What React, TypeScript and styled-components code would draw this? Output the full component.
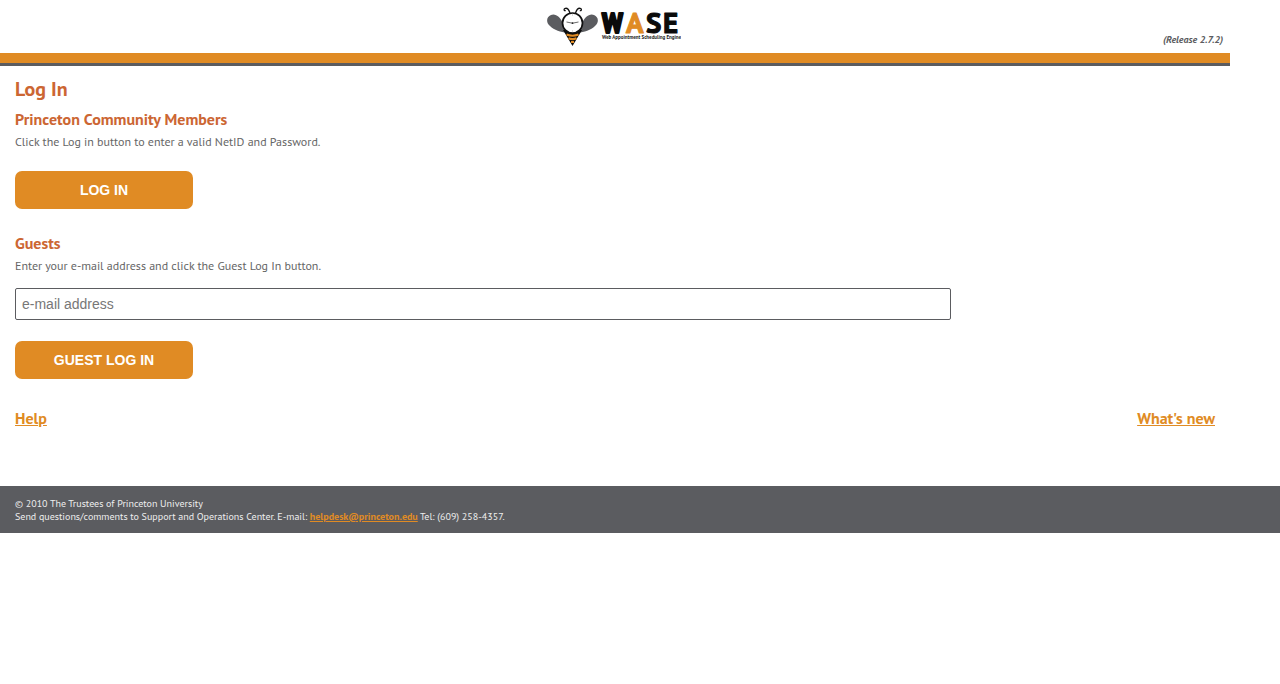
import React from "react";
import styled, { createGlobalStyle } from "styled-components";

const orange = "#e08b24";
const rust = "#cc6633";
const slate = "#5b5c60";

const GlobalStyle = createGlobalStyle`
  *, *::before, *::after { box-sizing: border-box; }
  body {
    margin: 0;
    background: #fff;
    color: #666;
    font-family: "PT Sans", "Noto Sans", sans-serif;
    font-size: 12px;
    line-height: 16px;
  }
`;

const Page = styled.div`
  margin-right: 50px;
`;

const Header = styled.header`
  display: grid;
  grid-template-columns: 1fr auto 1fr;
  height: 66px;
  border-bottom: 3px solid ${slate};
  box-shadow: inset 0 -10px ${orange};
`;

const LogoLink = styled.a`
  grid-column: 2;
  display: block;
  height: 53px;
  padding-right: 3px;
`;

const Release = styled.span`
  justify-self: end;
  padding: 32px 7px 0 0;
  color: ${slate};
  font-size: 10px;
  font-weight: bold;
  font-style: italic;
`;

const Main = styled.main`
  padding: 12px 15px 0;
`;

const Title = styled.h1`
  margin: 0 0 10px;
  color: ${rust};
  font-size: 20px;
  line-height: 22px;
`;

const Section = styled.section`
  margin-bottom: 25px;
`;

const Heading = styled.h2`
  margin: 0 0 6px;
  color: ${rust};
  font-size: 16px;
  line-height: 18px;
`;

const Text = styled.p`
  margin: 0;
  font-size: 12px;
  line-height: 16px;
`;

const Form = styled.form`
  display: flex;
  flex-direction: column;
  align-items: flex-start;
  gap: 21px;
`;

const EmailInput = styled.input`
  width: 78%;
  height: 32px;
  margin-top: 14px;
  padding: 0 6px;
  border: 1px solid ${slate};
  border-radius: 2px;
  font: 14px "Liberation Sans", Arial, sans-serif;
  &::placeholder { color: #777; }
`;

const Button = styled.button<{ $spaced?: boolean }>`
  display: block;
  width: 178px;
  height: 38px;
  margin-top: ${(p) => (p.$spaced ? 21 : 0)}px;
  border: 0;
  border-radius: 7px;
  background: ${orange};
  color: #fff;
  font: bold 14px "Liberation Sans", Arial, sans-serif;
  text-transform: uppercase;
  cursor: pointer;
`;

const Links = styled.nav`
  display: flex;
  justify-content: space-between;
  padding: 5px 0 59px;
`;

const PageLink = styled.a`
  color: ${orange};
  font-size: 16px;
  font-weight: bold;
  line-height: 18px;
`;

const Footer = styled.footer`
  padding: 11px 15px 10px;
  background: ${slate};
  color: #eee;
  font-size: 10px;
  line-height: 13px;
`;

const MailLink = styled.a`
  color: ${orange};
  font-weight: bold;
`;

const LogoLetters = styled.text`
  font: bold 29px "PT Sans", sans-serif;
  stroke-width: 1px;
  stroke-linejoin: round;
`;

const NarrowLetter = styled.tspan`
  font-family: "PT Sans Narrow", "PT Sans", sans-serif;
  stroke-width: 2px;
`;

const LogoTagline = styled.text`
  font: bold 5px "PT Sans", sans-serif;
`;

function Logo() {
  return (
    <svg width="134" height="53" viewBox="0 0 134 53" role="img" aria-label="WASE">
      <path d="M16 24C14 17 8 13 4 15C-1 17-1 23 3 26C7 30 14 32 20 33Z" fill={slate} />
      <path d="M35 24C37 17 43 13 47 15C52 17 52 23 48 26C44 30 37 32 31 33Z" fill={slate} />
      <path d="M16 30H35L25.5 46Z" fill="#0b0b0b" />
      <path d="M19.500 34.500Q25.500 37 31.500 34.500M21.500 38.300Q25.500 40 29.500 38.300M24 42H27" fill="none" stroke={orange} strokeWidth="2.2" />
      <circle cx="25.5" cy="23" r="10" fill="#fff" stroke="#111" strokeWidth="1.7" />
      <path d="M23 13C22 10 20.5 8 18.5 8.3C16.3 8.7 17 11.3 18.7 10.5M28.500 13C29.500 10 31 8 33 8.300C35.200 8.700 34.500 11.300 32.800 10.500" fill="none" stroke="#111" strokeWidth="1.3" />
      <path d="M19.500 22L25.500 23.200L31.500 22" fill="none" stroke="#444" strokeWidth="0.8" />
      <circle cx="25.500" cy="23.100" r="0.900" fill="#222" />
      <path d="M25.500 14.500V15.500M25.500 30.500V31.500" stroke="#999" strokeWidth="0.700" />
      <LogoLetters y="33" fill="#0b0b0b" stroke="#0b0b0b">
        <NarrowLetter x="55">W</NarrowLetter>
        <tspan x="79" fill={orange} stroke={orange}>A</tspan>
        <tspan x="99">S</tspan>
        <tspan x="116">E</tspan>
      </LogoLetters>
      <LogoTagline x="55" y="39" fill="#222">Web Appointment Scheduling Engine</LogoTagline>
    </svg>
  );
}

export default function App() {
  return (
    <>
      <GlobalStyle />
      <Page>
        <Header>
          <LogoLink href="#"><Logo /></LogoLink>
          <Release>(Release 2.7.2)</Release>
        </Header>
        <Main>
          <Title>Log In</Title>
          <Section>
            <Heading>Princeton Community Members</Heading>
            <Text>Click the Log in button to enter a valid NetID and Password.</Text>
            <Button type="button" $spaced>Log In</Button>
          </Section>
          <Section>
            <Heading>Guests</Heading>
            <Text as="label" htmlFor="email">Enter your e-mail address and click the Guest Log In button.</Text>
            <Form onSubmit={(e) => e.preventDefault()}>
              <EmailInput id="email" type="email" placeholder="e-mail address" />
              <Button type="submit">Guest Log In</Button>
            </Form>
          </Section>
          <Links>
            <PageLink href="#help">Help</PageLink>
            <PageLink href="#new">What's new</PageLink>
          </Links>
        </Main>
      </Page>
      <Footer>
        <div>© 2010 The Trustees of Princeton University</div>
        <div>
          Send questions/comments to Support and Operations Center. E-mail:{" "}
          <MailLink href="mailto:helpdesk@princeton.edu">helpdesk@princeton.edu</MailLink> Tel: (609) 258-4357.
        </div>
      </Footer>
    </>
  );
}
